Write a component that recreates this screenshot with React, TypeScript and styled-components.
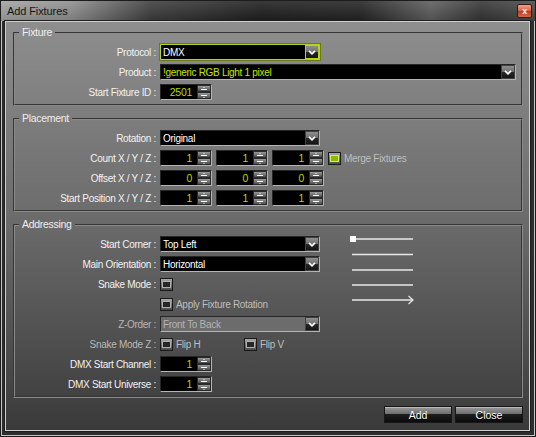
import React from 'react';
import styled, { createGlobalStyle } from 'styled-components';

const GlobalStyle = createGlobalStyle`
  html, body { margin: 0; padding: 0; background: #1a1a1a; }
  body {
    font-family: "Liberation Sans", Arial, sans-serif;
    font-size: 10px;
    letter-spacing: -0.3px;
  }
`

const Window = styled.div`
  width: 536px;
  height: 437px;
  box-sizing: border-box;
  border: 1px solid #1c1c1c;
  display: flex;
  flex-direction: column;
  background: #333;
`
const TitleBar = styled.div`
  height: 20px;
  flex: none;
  display: flex;
  align-items: center;
  justify-content: space-between;
  padding: 0 3px 0 6px;
  background:
    linear-gradient(to bottom, rgba(255,255,255,0.12), rgba(0,0,0,0.12)),
    linear-gradient(to right, #a2a2a2 0px, #8e8e8e 70px, #3c3c3c 150px, #1e1e1e 260px, #232323 360px, #5c5c5c 430px, #343434 480px, #4a4a4a 536px);
`
const TitleText = styled.span`
  font-size: 11px;
  color: #151515;
  letter-spacing: -0.1px;
`
const CloseButton = styled.span`
  width: 15px;
  height: 14px;
  box-sizing: border-box;
  border: 1px solid #3a1a10;
  border-radius: 2px;
  background: linear-gradient(to bottom, #f0a090 0%, #d86040 50%, #b83a1a 51%, #d26a4a 100%);
  color: #fff;
  font-size: 9px;
  font-weight: bold;
  display: flex;
  align-items: center;
  justify-content: center;
  line-height: 1;
`
const Frame = styled.div`
  flex: 1;
  display: flex;
  padding: 0 5px 5px 4px;
  box-shadow: inset 1px 0 0 #c4c4c4, inset -1px -1px 0 #c4c4c4;
  background: #2e2e2e;
`
const Client = styled.div`
  flex: 1;
  display: flex;
  flex-direction: column;
  gap: 6px;
  padding: 4px 6px 0 7px;
  border: 1px solid #cfcfcf;
  box-shadow: 0 0 0 1px #1e1e1e;
  background: linear-gradient(to bottom, #8e8e8e 0%, #6a6a6a 50%, #3a3a3a 100%);
`
const Group = styled.fieldset`
  margin: 0;
  padding: 5px 0 4px 0;
  border: 2px groove #8a8a8a;
  min-width: 0;
`
const Legend = styled.legend`
  margin-left: 4px;
  padding: 0 3px;
  color: #eeeeee;
  font-size: 10.5px;
  line-height: 13px;
`
const Rows = styled.div`
  display: flex;
  flex-direction: column;
  gap: 4px;
`
const Row = styled.div`
  display: flex;
  align-items: center;
  height: 16px;
  gap: 4px;
`
const Label = styled.span<{ $dim?: boolean }>`
  flex: none;
  width: 141px;
  text-align: right;
  white-space: nowrap;
  color: ${p => (p.$dim ? '#b8b8b8' : '#f2f2f2')};
`
const Select = styled.div<{ $width: number; $focus?: boolean; $disabled?: boolean; $green?: boolean }>`
  width: ${p => p.$width}px;
  height: 16px;
  box-sizing: border-box;
  flex: none;
  display: flex;
  align-items: center;
  justify-content: space-between;
  padding-left: 2px;
  border: 1px solid;
  border-color: ${p => (p.$focus ? '#b4d41c' : '#262626 #b4b4b4 #b4b4b4 #262626')};
  box-shadow: ${p => (p.$focus ? '0 0 0 1px #6a7a18' : 'none')};
  background: ${p => (p.$disabled ? '#6c6c6c' : '#000')};
  color: ${p => (p.$disabled ? '#b4b4b4' : p.$green ? '#c4e400' : '#ffffff')};
  white-space: nowrap;
`
const DropButton = styled.span<{ $focus?: boolean }>`
  flex: none;
  width: 14px;
  height: 14px;
  box-sizing: border-box;
  border: 1px solid ${p => (p.$focus ? '#b4d41c' : '#404040')};
  background: linear-gradient(to bottom, #909090 0%, #6c6c6c 50%, #282828 51%, #141414 100%);
  display: flex;
  align-items: center;
  justify-content: center;
`
const Spin = styled.div`
  width: 52px;
  height: 16px;
  box-sizing: border-box;
  flex: none;
  display: flex;
  border: 1px solid;
  border-color: #262626 #b4b4b4 #b4b4b4 #262626;
  background: #000;
`
const SpinValue = styled.span`
  flex: 1;
  text-align: right;
  padding-right: 5px;
  color: #b4d800;
  font-size: 10.5px;
  line-height: 14px;
`
const SpinButtons = styled.span`
  width: 14px;
  display: flex;
  flex-direction: column;
`
const SpinHalf = styled.span`
  flex: 1;
  display: flex;
  align-items: center;
  justify-content: center;
  border: 1px solid #2a2a2a;
  background: linear-gradient(to bottom, #9a9a9a, #4c4c4c);
`
const Check = styled.span<{ $on?: boolean }>`
  flex: none;
  width: 13px;
  height: 13px;
  box-sizing: border-box;
  border: 1px solid #1a1a1a;
  background: linear-gradient(to bottom, #a8a8a8, #4a4a4a);
  display: flex;
  align-items: center;
  justify-content: center;
  &::after {
    content: '';
    width: 7px;
    height: 5px;
    border: 1px solid ${p => (p.$on ? '#d0f060' : '#b0b0b0')};
    background: ${p => (p.$on ? '#8cb800' : '#262626')};
  }
`
const CheckItem = styled.span<{ $width?: number }>`
  display: flex;
  align-items: center;
  gap: 3px;
  width: ${p => (p.$width ? `${p.$width}px` : 'auto')};
  color: #bdbdbd;
  white-space: nowrap;
`
const Columns = styled.div`
  display: flex;
  align-items: flex-start;
`
const Preview = styled.svg`
  flex: none;
  margin: -1px 0 0 29px;
`
const ButtonRow = styled.div`
  display: flex;
  justify-content: flex-end;
  gap: 3px;
  margin-top: 2px;
`
const DialogButton = styled.button`
  width: 68px;
  height: 17px;
  padding: 0;
  border: 1px solid #161616;
  font-family: inherit;
  font-size: 10.5px;
  color: #ffffff;
  text-shadow: 0 1px 0 #000;
  background: linear-gradient(to bottom, #9a9a9a 0%, #6e6e6e 45%, #1c1c1c 50%, #0c0c0c 100%);
  box-shadow: inset 0 1px 0 rgba(255,255,255,0.35);
`

const Chevron = () => (
  <svg width="8" height="5" viewBox="0 0 8 5">
    <path d="M1 0.8 L4 3.8 L7 0.8" stroke="#fff" strokeWidth="1.7" fill="none" />
  </svg>
)

const Dropdown = (props: { value: string; width: number; focus?: boolean; disabled?: boolean; green?: boolean }) => (
  <Select $width={props.width} $focus={props.focus} $disabled={props.disabled} $green={props.green}>
    <span>{props.value}</span>
    <DropButton $focus={props.focus}>
      <Chevron />
    </DropButton>
  </Select>
)

const SpinBox = ({ value }: { value: string }) => (
  <Spin>
    <SpinValue>{value}</SpinValue>
    <SpinButtons>
      <SpinHalf>
        <svg width="8" height="4" viewBox="0 0 8 4">
          <path d="M4 0 L5 1 L3 1 Z" fill="#fff" />
          <path d="M1 2.5 H7" stroke="#fff" strokeWidth="1" />
        </svg>
      </SpinHalf>
      <SpinHalf>
        <svg width="8" height="4" viewBox="0 0 8 4">
          <path d="M1 1.5 H7" stroke="#fff" strokeWidth="1" />
          <path d="M3 3 L5 3 L4 4 Z" fill="#fff" />
        </svg>
      </SpinHalf>
    </SpinButtons>
  </Spin>
)

export default function App() {
  return (
    <>
      <GlobalStyle />
      <Window>
        <TitleBar>
          <TitleText>Add Fixtures</TitleText>
          <CloseButton>x</CloseButton>
        </TitleBar>
        <Frame>
          <Client>
            <Group>
              <Legend>Fixture</Legend>
              <Rows>
                <Row>
                  <Label>Protocol :</Label>
                  <Dropdown value="DMX" width={160} focus />
                </Row>
                <Row>
                  <Label>Product :</Label>
                  <Dropdown value="!generic RGB Light 1 pixel" width={356} green />
                </Row>
                <Row>
                  <Label>Start Fixture ID :</Label>
                  <SpinBox value="2501" />
                </Row>
              </Rows>
            </Group>

            <Group>
              <Legend>Placement</Legend>
              <Rows>
                <Row>
                  <Label>Rotation :</Label>
                  <Dropdown value="Original" width={160} />
                </Row>
                <Row>
                  <Label>Count X / Y / Z :</Label>
                  <SpinBox value="1" />
                  <SpinBox value="1" />
                  <SpinBox value="1" />
                  <CheckItem>
                    <Check $on />
                    Merge Fixtures
                  </CheckItem>
                </Row>
                <Row>
                  <Label>Offset X / Y / Z :</Label>
                  <SpinBox value="0" />
                  <SpinBox value="0" />
                  <SpinBox value="0" />
                </Row>
                <Row>
                  <Label>Start Position X / Y / Z :</Label>
                  <SpinBox value="1" />
                  <SpinBox value="1" />
                  <SpinBox value="1" />
                </Row>
              </Rows>
            </Group>

            <Group>
              <Legend>Addressing</Legend>
              <Columns>
                <Rows>
                  <Row>
                    <Label>Start Corner :</Label>
                    <Dropdown value="Top Left" width={160} />
                  </Row>
                  <Row>
                    <Label>Main Orientation :</Label>
                    <Dropdown value="Horizontal" width={160} />
                  </Row>
                  <Row>
                    <Label>Snake Mode :</Label>
                    <Check />
                  </Row>
                  <Row>
                    <Label />
                    <CheckItem>
                      <Check />
                      Apply Fixture Rotation
                    </CheckItem>
                  </Row>
                  <Row>
                    <Label $dim>Z-Order :</Label>
                    <Dropdown value="Front To Back" width={160} disabled />
                  </Row>
                  <Row>
                    <Label $dim>Snake Mode Z :</Label>
                    <CheckItem $width={80}>
                      <Check />
                      Flip H
                    </CheckItem>
                    <CheckItem>
                      <Check />
                      Flip V
                    </CheckItem>
                  </Row>
                  <Row>
                    <Label>DMX Start Channel :</Label>
                    <SpinBox value="1" />
                  </Row>
                  <Row>
                    <Label>DMX Start Universe :</Label>
                    <SpinBox value="1" />
                  </Row>
                </Rows>
                <Preview width="66" height="72" viewBox="0 0 66 72">
                  <rect x="1" y="1" width="6" height="6" fill="#fff" />
                  <path d="M7 4 H64" stroke="#e8e8e8" strokeWidth="1.4" />
                  <path d="M3 19.5 H64" stroke="#e8e8e8" strokeWidth="1.4" />
                  <path d="M3 35 H64" stroke="#e8e8e8" strokeWidth="1.4" />
                  <path d="M3 50 H64" stroke="#e8e8e8" strokeWidth="1.4" />
                  <path d="M3 65 H64" stroke="#e8e8e8" strokeWidth="1.4" />
                  <path d="M59.5 61 L64 65 L59.5 69" stroke="#e8e8e8" strokeWidth="1.2" fill="none" />
                </Preview>
              </Columns>
            </Group>

            <ButtonRow>
              <DialogButton>Add</DialogButton>
              <DialogButton>Close</DialogButton>
            </ButtonRow>
          </Client>
        </Frame>
      </Window>
    </>
  )
}
